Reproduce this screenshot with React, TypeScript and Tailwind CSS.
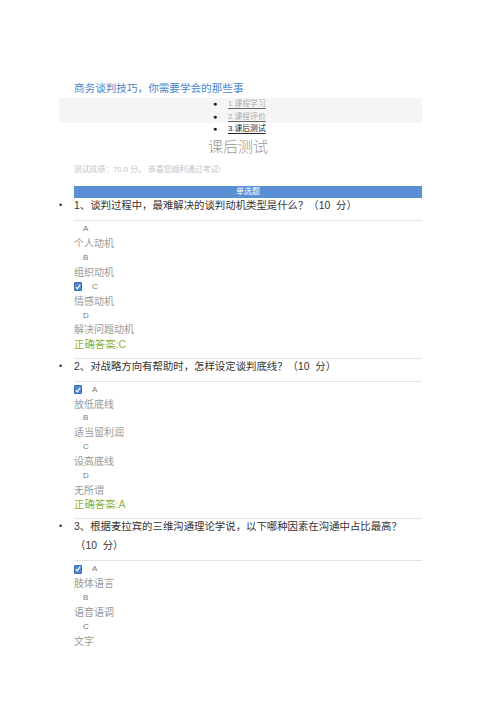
import React from "react";

const font = "font-['Liberation_Sans','Noto_Sans_CJK_SC',sans-serif]";

function Check() {
  return (
    <span className="inline-flex h-[9px] w-[8px] items-center justify-center rounded-[1px] bg-[#4f86cf] border border-[#3a6fb8]">
      <svg width="6" height="6" viewBox="0 0 6 6">
        <path d="M0.8 3.2 L2.3 4.8 L5.2 0.6" stroke="#fff" strokeWidth="1.1" fill="none" />
      </svg>
    </span>
  );
}

type Opt = { letter: string; text: string; checked?: boolean };

function Options({ opts }: { opts: Opt[] }) {
  return (
    <div className="flex flex-col">
      {opts.map((o) => (
        <React.Fragment key={o.letter}>
          <div className="flex h-[14.4px] items-center text-[8px] text-[#777]">
            {o.checked ? (
              <>
                <Check />
                <span className="ml-[10px]">{o.letter}</span>
              </>
            ) : (
              <span className="ml-[9px]">{o.letter}</span>
            )}
          </div>
          <div className="flex h-[14.4px] items-center text-[10px] text-[#999]">{o.text}</div>
        </React.Fragment>
      ))}
    </div>
  );
}

function Question({
  lines,
  opts,
  answer,
  last,
}: {
  lines: string[];
  opts: Opt[];
  answer?: string;
  last?: boolean;
}) {
  return (
    <div className="flex flex-col">
      <div className="flex">
        <div className="-ml-[15px] w-[15px] flex h-[14px] items-center text-[9px] text-[#333]">•</div>
        <div className="flex flex-col">
          {lines.map((l, i) => (
            <div
              key={i}
              className={`flex items-center text-[10.4px] text-[#333] ${i === 0 ? "h-[14px]" : "h-[19px] pt-[5px] pl-[1px]"}`}
            >
              {l}
            </div>
          ))}
        </div>
      </div>
      <div className="mt-[7px] border-t border-[#e3e3e3]" />
      <div className="pt-[1px]">
        <Options opts={opts} />
        {answer && (
          <div className="flex h-[14.4px] items-center text-[10.4px] text-[#8fb13c]">{answer}</div>
        )}
      </div>
      {!last && <div className="mt-[6px] border-t border-[#e3e3e3] mb-[1px]" />}
    </div>
  );
}

export default function App() {
  return (
    <div className={`min-h-[702px] w-[496px] bg-white ${font}`}>
      <div className="ml-[74px] w-[348px] pt-[82px] flex flex-col">
        <div className="flex h-[14px] items-center text-[10.6px] text-[#4a86cf]">
          商务谈判技巧，你需要学会的那些事
        </div>
        <div className="-ml-[15px] mt-[2px] bg-[#f5f5f5] h-[25px] flex flex-col justify-center">
          {["1.课程学习", "2.课程评价"].map((t) => (
            <div key={t} className="flex h-[12.5px] items-center">
              <span className="ml-[154px] w-[15px] text-[7px] text-[#111]">●</span>
              <span className="text-[7.8px] text-[#aaa] underline underline-offset-[2px] decoration-[#666]">{t}</span>
            </div>
          ))}
        </div>
        <div className="-ml-[15px] flex h-[12.5px] items-center">
          <span className="ml-[154px] w-[15px] text-[7px] text-[#111]">●</span>
          <span className="text-[7.8px] text-[#222] underline underline-offset-[2px] decoration-[#222]">3.课后测试</span>
        </div>
        <div className="flex h-[22px] items-center justify-center text-[15px] text-[#999] font-light -ml-[20px] mt-[1px]">
          课后测试
        </div>
        <div className="flex h-[12px] items-center text-[7.8px] text-[#c4c4c4] mt-[5px]">
          测试成绩：70.0 分。 恭喜您顺利通过考试!
        </div>
        <div className="mt-[10px] flex h-[12.5px] items-center justify-center bg-[#5b8fd4] text-[8px] text-white">
          单选题
        </div>
        <div className="mt-[1px]">
          <Question
            lines={["1、谈判过程中，最难解决的谈判动机类型是什么？（10\u00a0\u00a0分）"]}
            opts={[
              { letter: "A", text: "个人动机" },
              { letter: "B", text: "组织动机" },
              { letter: "C", text: "情感动机", checked: true },
              { letter: "D", text: "解决问题动机" },
            ]}
            answer="正确答案:C"
          />
          <Question
            lines={["2、对战略方向有帮助时，怎样设定谈判底线？（10\u00a0\u00a0分）"]}
            opts={[
              { letter: "A", text: "放低底线", checked: true },
              { letter: "B", text: "适当留利润" },
              { letter: "C", text: "设高底线" },
              { letter: "D", text: "无所谓" },
            ]}
            answer="正确答案:A"
          />
          <Question
            lines={[
              "3、根据麦拉宾的三维沟通理论学说，以下哪种因素在沟通中占比最高？",
              "（10\u00a0\u00a0分）",
            ]}
            opts={[
              { letter: "A", text: "肢体语言", checked: true },
              { letter: "B", text: "语音语调" },
              { letter: "C", text: "文字" },
            ]}
            last
          />
        </div>
      </div>
    </div>
  );
}
